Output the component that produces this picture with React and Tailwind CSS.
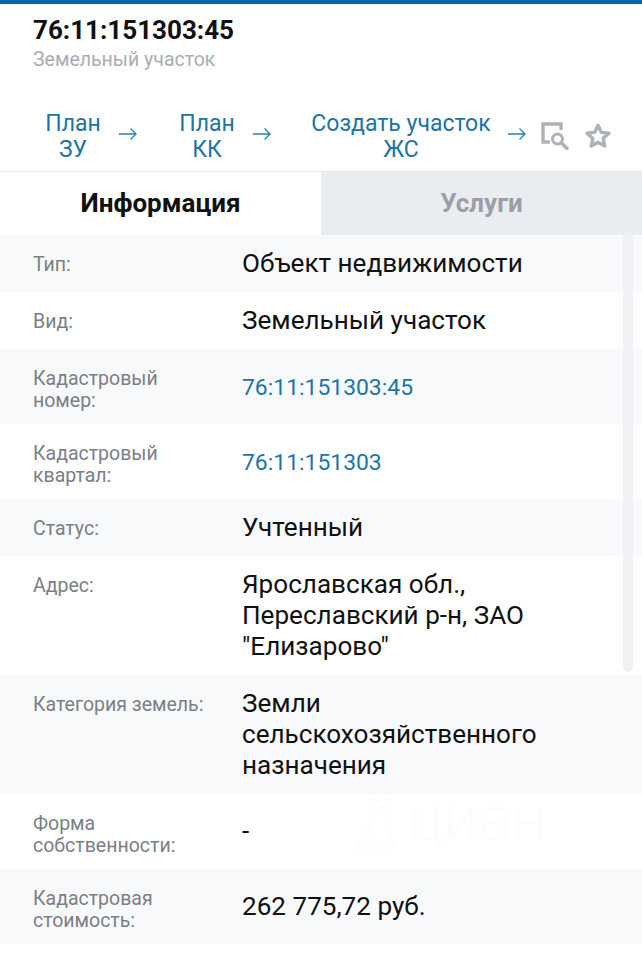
const rows = [
  { label: 'Тип:', value: 'Объект недвижимости', alt: true },
  { label: 'Вид:', value: 'Земельный участок' },
  { label: ['Кадастровый', 'номер:'], value: '76:11:151303:45', alt: true, link: true },
  { label: ['Кадастровый', 'квартал:'], value: '76:11:151303', link: true },
  { label: 'Статус:', value: 'Учтенный', alt: true },
  { label: 'Адрес:', value: ['Ярославская обл.,', 'Переславский р-н, ЗАО', '"Елизарово"'] },
  { label: 'Категория земель:', value: ['Земли', 'сельскохозяйственного', 'назначения'], alt: true },
  { label: ['Форма', 'собственности:'], value: '-' },
  { label: ['Кадастровая', 'стоимость:'], value: '262 775,72 руб.', alt: true },
];

const lines = (text) => (Array.isArray(text) ? text : [text]).map((t) => <div key={t}>{t}</div>);

const Arrow = () => (
  <svg width="20" height="14" viewBox="0 0 20 14" fill="none" stroke="#2f7fae" strokeWidth="1.3" className="shrink-0">
    <path d="M1 7h17M12.500 1.500 18 7l-5.500 5.500" />
  </svg>
);

const PlanSearchIcon = () => (
  <svg width="28" height="28" viewBox="0 0 28 28" fill="none" stroke="#adb3bb" className="shrink-0">
    <path d="M20 8V2H2v18h7" strokeWidth="3.400" />
    <circle cx="16.500" cy="17" r="5" strokeWidth="3" />
    <path d="m20.500 21 5.500 5.500" strokeWidth="3.400" strokeLinecap="round" />
  </svg>
);

const StarIcon = () => (
  <svg width="28" height="28" viewBox="0 0 26 26" fill="none" stroke="#adb3bb" strokeWidth="3.200" strokeLinejoin="round" className="shrink-0">
    <path d="m13 3 3 6.600 7.200.8-5.400 4.800 1.500 7.100L13 18.700l-6.300 3.600 1.500-7.100-5.400-4.800 7.200-.8z" />
  </svg>
);

const WatermarkLogo = () => (
  <svg width="48" height="68" viewBox="0 0 48 68" fill="none" stroke="#fbfbfc" strokeWidth="1.500">
    <circle cx="32" cy="11" r="9" />
    <path d="M32 20 6 64h38L32 20M20 44l10 20" />
  </svg>
);

const Row = ({ row }) => (
  <div className={`grid grid-cols-[209px_1fr] px-[33px] py-[13px] ${row.alt ? 'bg-[#f8f9fb]' : 'bg-white'}`}>
    <div className="-mb-px mt-[6px] text-[19.500px] leading-[22px] text-[#7a7f85]">{lines(row.label)}</div>
    <div className={`self-center leading-[31px] ${row.link ? 'pt-px text-[22.900px] text-[#1c74a6]' : 'text-[26.100px] text-[#111111]'}`}>
      {lines(row.value)}
    </div>
  </div>
);

export default function App() {
  return (
    <div className="relative h-[960px] w-[642px] overflow-hidden bg-white font-['Roboto',sans-serif]">
      <div className="h-1 bg-[#0468ab]" />

      <div className="pl-[33px] pt-[10px]">
        <h1 className="text-[26px] font-bold leading-[32px] text-[#111111]">76:11:151303:45</h1>
        <p className="mt-px text-[19.500px] leading-[26px] text-[#a9aeb4]">Земельный участок</p>
      </div>

      <div className="mt-[34px] flex h-[65px] items-start border-b border-[#e5e6e8] pl-[33px] pt-[4px] text-center text-[23px] leading-[26px] text-[#1c74a6]">
        <a className="w-[80px]">План<br />ЗУ</a>
        <div className="ml-[5px] mt-[16px]"><Arrow /></div>
        <a className="ml-[29px] w-[80px]">План<br />КК</a>
        <div className="ml-[5px] mt-[16px]"><Arrow /></div>
        <a className="ml-[39px] w-[180px]">Создать участок<br />ЖС</a>
        <div className="ml-[16px] mt-[16px]"><Arrow /></div>
        <div className="ml-[14px] mt-[11px]"><PlanSearchIcon /></div>
        <div className="ml-[15px] mt-[11px]"><StarIcon /></div>
      </div>

      <div className="flex h-[63px] text-[26px] font-bold leading-[63px]">
        <div className="w-[321px] bg-white text-center text-[#111111]">Информация</div>
        <div className="flex-1 bg-[#e9ecf0] text-center text-[#9a9fa6]">Услуги</div>
      </div>

      <div>
        {rows.map((row) => (
          <Row key={lines(row.label)[0].key} row={row} />
        ))}
      </div>

      {/* scrollbar */}
      <div className="absolute left-[623px] top-[235px] h-[437px] w-[10px] rounded-b-[5px] bg-[#f0f1f4]" />

      {/* watermark */}
      <div className="absolute left-[350px] top-[784px] flex items-end gap-[10px]">
        <WatermarkLogo />
        <div className="text-[62px] font-light leading-[68px] text-[#fcfcfd]">циан</div>
      </div>
    </div>
  );
}
